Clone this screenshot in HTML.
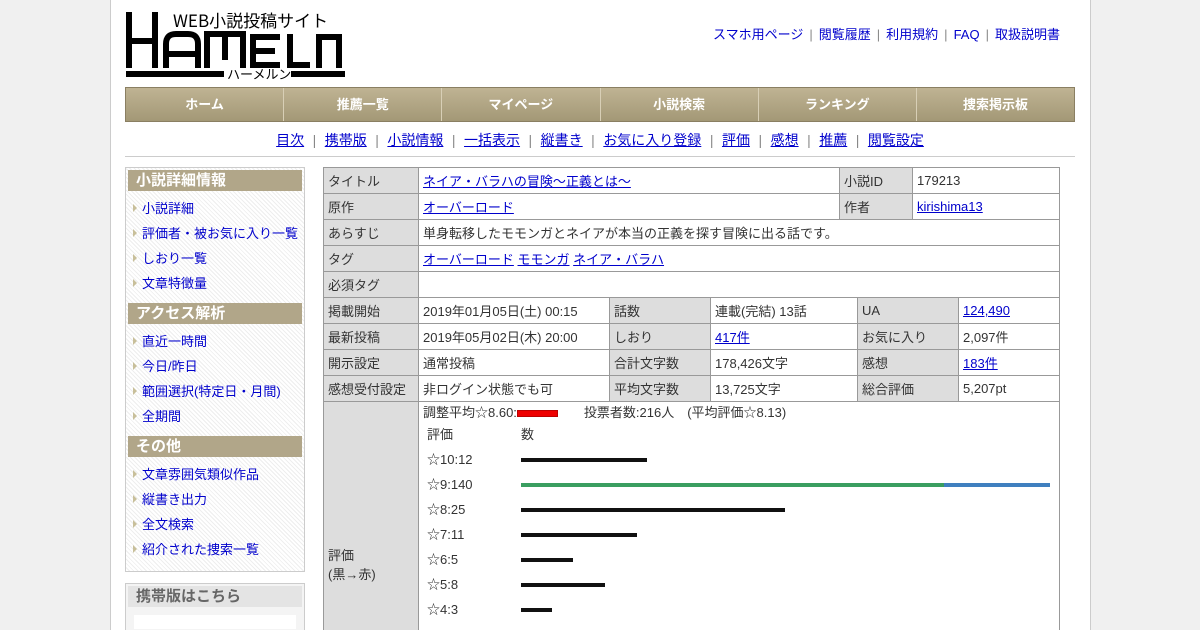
<!DOCTYPE html>
<html style="overflow:hidden;height:630px"><head><meta charset="utf-8"><style>
*{box-sizing:border-box;margin:0;padding:0}
body{width:1200px;height:630px;overflow:hidden;background:#f0f0f0;font-family:"Liberation Sans","Noto Sans CJK JP",sans-serif;font-size:13px;color:#333}
#wrap{position:absolute;left:110px;top:0;width:981px;height:630px;background:#fff;border-left:1px solid #ccc;border-right:1px solid #ccc;overflow:hidden}
a{color:#0000cc;text-decoration:underline}
.abs{position:absolute}
#toplinks{position:absolute;left:602px;top:24px;font-size:13px;color:#888}
#toplinks a{text-decoration:none;color:#0000cc}
#toplinks i{font-style:normal;margin:0 6px}
#nav{position:absolute;left:14px;top:87px;width:950px;height:35px;display:flex;border:1px solid #8a7f62}
#nav div{flex:1;background:linear-gradient(#bfb393,#a39876);color:#fff;font-weight:bold;text-align:center;line-height:33px;border-right:1px solid #d8cfb6;font-size:13px}
#nav div:last-child{border-right:none}
#sub{position:absolute;left:14px;width:950px;top:130px;text-align:center;font-size:14px;color:#888}
#sub a{margin:0 8.5px}
#hr{position:absolute;left:14px;top:156px;width:950px;border-top:1px solid #ccc}
.side{position:absolute;left:14px;width:180px;border:1px solid #ccc;background:repeating-linear-gradient(45deg,#fff 0 2px,#eee 2px 3px);padding:2px}
.side h3{background:#b1a689;color:#fff;font-size:15px;height:21px;line-height:21px;padding-left:8px;margin-bottom:5px}
.side h3.m{margin-top:7px}
.side li{list-style:none;height:25px;line-height:25px;padding-left:14px;position:relative}
.side li:before{content:"";position:absolute;left:5px;top:8px;border-left:4px solid #c8bf9a;border-top:4px solid transparent;border-bottom:4px solid transparent}
.side li a{text-decoration:none}
table{position:absolute;left:212px;top:167px;border-collapse:collapse;font-size:13px}
td{border:1px solid #999;height:26px;padding:0 4px;white-space:nowrap}
td.l{background:#ddd}
.bar{position:absolute;height:4px;background:#111}
</style></head><body><div id="wrap">
<svg class="abs" style="left:15px;top:10px" width="220" height="70">
<g stroke="#000" stroke-width="6" fill="none">
<path d="M3 2v56M29 2v56M3 31h26"/>
<path d="M40 58V34q0-10 10-10h12q10 0 10 10v24M40 44h32"/>
<path d="M81 58V24h36v34M99 24v26"/>
<path d="M154 27h-27v28h27M127 41h22"/>
<path d="M164 24v31h20"/>
<path d="M193 58V27h20v31"/>
</g>
<text x="47" y="17" font-size="17" font-family="Noto Sans CJK JP,sans-serif" fill="#000">WEB小説投稿サイト</text>
<rect x="0" y="61" width="98" height="6" fill="#000"/><rect x="165" y="61" width="54" height="6" fill="#000"/>
<text x="101" y="69" font-size="13" font-family="Noto Sans CJK JP,sans-serif" fill="#000">ハーメルン</text>
</svg>
<div id="toplinks"><a>スマホ用ページ</a><i>|</i><a>閲覧履歴</a><i>|</i><a>利用規約</a><i>|</i><a>FAQ</a><i>|</i><a>取扱説明書</a></div>
<div id="nav"><div>ホーム</div><div>推薦一覧</div><div>マイページ</div><div>小説検索</div><div>ランキング</div><div>捜索掲示板</div></div>
<div id="sub"><a>目次</a>|<a>携帯版</a>|<a>小説情報</a>|<a>一括表示</a>|<a>縦書き</a>|<a>お気に入り登録</a>|<a>評価</a>|<a>感想</a>|<a>推薦</a>|<a>閲覧設定</a></div>
<div id="hr"></div>
<div class="side" style="top:167px;height:405px">
<h3>小説詳細情報</h3><ul><li><a>小説詳細</a></li><li><a>評価者・被お気に入り一覧</a></li><li><a>しおり一覧</a></li><li><a>文章特徴量</a></li></ul>
<h3 class="m">アクセス解析</h3><ul><li><a>直近一時間</a></li><li><a>今日/昨日</a></li><li><a>範囲選択(特定日・月間)</a></li><li><a>全期間</a></li></ul>
<h3 class="m">その他</h3><ul><li><a>文章雰囲気類似作品</a></li><li><a>縦書き出力</a></li><li><a>全文検索</a></li><li><a>紹介された捜索一覧</a></li></ul>
</div>
<div class="side" style="top:583px;height:47px;background:#f4f4f4;border-bottom:none"><h3 style="background:#e4e4e4;color:#666">携帯版はこちら</h3><div style="background:#fff;margin:8px 6px 0;height:14px"></div></div>
<table>
<tr><td class="l" style="width:95px">タイトル</td><td colspan="3" style="width:421px"><a>ネイア・バラハの冒険～正義とは～</a></td><td class="l" style="width:73px">小説ID</td><td style="width:147px">179213</td></tr>
<tr><td class="l">原作</td><td colspan="3"><a>オーバーロード</a></td><td class="l">作者</td><td><a>kirishima13</a></td></tr>
<tr><td class="l">あらすじ</td><td colspan="5">単身転移したモモンガとネイアが本当の正義を探す冒険に出る話です。</td></tr>
<tr><td class="l">タグ</td><td colspan="5"><a>オーバーロード</a> <a>モモンガ</a> <a>ネイア・バラハ</a></td></tr>
<tr><td class="l">必須タグ</td><td colspan="5"></td></tr>
</table>
<table style="top:297px">
<tr><td class="l" style="width:95px">掲載開始</td><td style="width:191px">2019年01月05日(土) 00:15</td><td class="l" style="width:101px">話数</td><td style="width:147px">連載(完結) 13話</td><td class="l" style="width:101px">UA</td><td style="width:101px"><a>124,490</a></td></tr>
<tr><td class="l">最新投稿</td><td>2019年05月02日(木) 20:00</td><td class="l">しおり</td><td><a>417件</a></td><td class="l">お気に入り</td><td>2,097件</td></tr>
<tr><td class="l">開示設定</td><td>通常投稿</td><td class="l">合計文字数</td><td>178,426文字</td><td class="l">感想</td><td><a>183件</a></td></tr>
<tr><td class="l">感想受付設定</td><td>非ログイン状態でも可</td><td class="l">平均文字数</td><td>13,725文字</td><td class="l">総合評価</td><td>5,207pt</td></tr>
<tr><td class="l" style="height:232px;vertical-align:top;padding-top:143px;border-bottom:none">評価<br>(黒→赤)</td><td colspan="5" style="vertical-align:top;border-bottom:none"></td></tr>
</table>
<div class="abs" style="left:312px;top:404px;line-height:18px">調整平均☆8.60:<span style="display:inline-block;width:41px;height:7px;background:#e00;border:1px solid #b00;vertical-align:middle"></span>　　投票者数:216人　(平均評価☆8.13)</div>
<div class="abs" style="left:316px;top:422px;line-height:25px">評価<br>☆10:12<br>☆9:140<br>☆8:25<br>☆7:11<br>☆6:5<br>☆5:8<br>☆4:3</div>
<div class="abs" style="left:410px;top:422px;line-height:25px">数</div>
<div class="bar" style="left:410px;top:458px;width:126px"></div>
<div class="bar" style="left:410px;top:483px;width:423px;background:#3a9e60"></div>
<div class="bar" style="left:833px;top:483px;width:106px;background:#3f7fbf"></div>
<div class="bar" style="left:410px;top:508px;width:264px"></div>
<div class="bar" style="left:410px;top:533px;width:116px"></div>
<div class="bar" style="left:410px;top:558px;width:52px"></div>
<div class="bar" style="left:410px;top:583px;width:84px"></div>
<div class="bar" style="left:410px;top:608px;width:31px"></div>
</div></body></html>
